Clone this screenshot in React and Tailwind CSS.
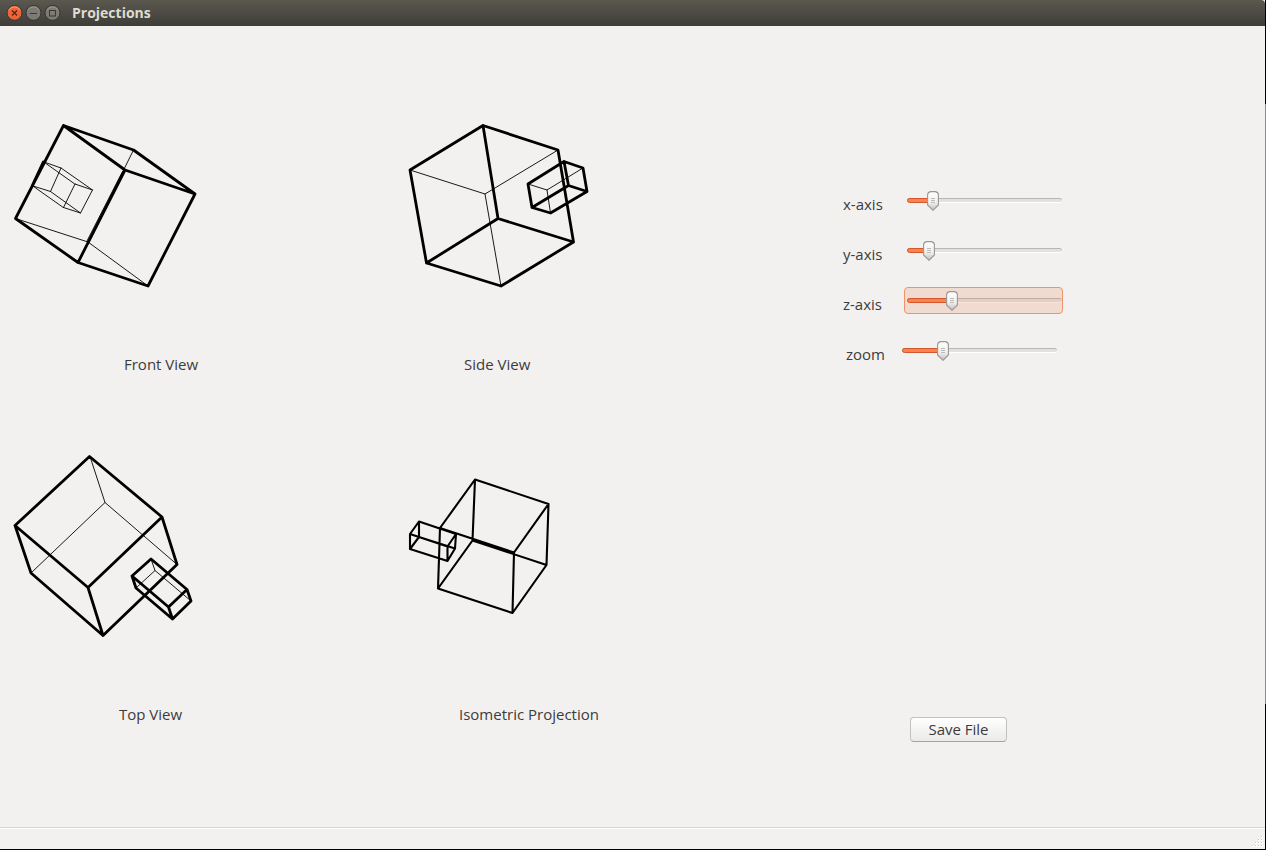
import { useState } from "react";

const views = [
  {
    title: "Front View",
    viewBox: "0 26 220 329",
    labelClass: "pl-[124px]",
    stroke: 2.8,
    thick:
      "M63.5 125.5L133.5 150L195 194L148 286L78 262.5L15.5 218.5ZM63.5 125.5L125 170L195 194M125 170L78 262.5M43.3 162L32.3 185.5",
    thin:
      "M133.5 150L88 242M15.5 218.5L88 242L148 286M44 162L61 168L92.5 190L75 184ZM33 186L50.5 191.5L80.5 213L63.5 207.5ZM61 168L50.5 191.5M92.5 190L80.5 213M75 184L63.5 207.5M122.5 171.5L87 241",
  },
  {
    title: "Side View",
    viewBox: "395 26 220 329",
    labelClass: "pl-[69px]",
    stroke: 2.8,
    thick:
      "M483 125.5L558 150L573.5 242L501 286L426.5 263L410 170ZM483 125.5L498 218.5L426.5 263M498 218.5L573.5 242M564 161.5L583 168L587 191.5L550.5 213L532 207.5L528 184ZM564 161.5L568.5 185.5L532 207.5M568.5 185.5L587 191.5",
    thin:
      "M410 170L485 194L558 150M485 194L501 286M528 184L547 190L583 168M547 190L550.5 213",
  },
  {
    title: "Top View",
    viewBox: "0 376 220 329",
    labelClass: "pl-[119px]",
    stroke: 2.8,
    thick:
      "M89.5 456.5L162 517L177 564.5L103 635.5L31 573L15 525.5ZM15 525.5L88 587.5L162 517M88 587.5L103 635.5M151 559L187 589.5L191 601L172.5 619L136 588L132 576ZM132 576L168.5 607L187 589.5M168.5 607L172.5 619",
    thin:
      "M90 456.5L105 502.5L31 573M105 502.5L177 564.5M151 559L155 570.5L136 588M155 570.5L191 601",
  },
  {
    title: "Isometric Projection",
    viewBox: "395 376 220 329",
    labelClass: "pl-[64px]",
    stroke: 2.1,
    thick:
      "M475 479.5L548.5 504L546.5 565L512.5 613L438 588.5L440 528ZM475 479.5L472.5 540.5L438 588.5M472.5 540.5L546.5 565M440 528L514 552.5L548.5 504M514 552.5L512.5 613M419 521.5L456 534L455 548.5L447.5 561L410 549L410 534ZM419 521.5L419 537L410 549M419 537L455 548.5M410 534L447.5 546.5L456 534M447.5 546.5L447.5 561",
    thin: "",
  },
];

const sliders = [
  { id: "x-axis", max: 360, start: 50 },
  { id: "y-axis", max: 360, start: 40 },
  { id: "z-axis", max: 360, start: 98 },
  { id: "zoom", max: 200, start: 49 },
];

function View({ view }) {
  return (
    <figure>
      <svg
        className="block h-[329px] w-[220px]"
        viewBox={view.viewBox}
        fill="none"
        stroke="#000"
        strokeLinejoin="round"
        strokeLinecap="round"
        aria-hidden="true"
      >
        <path d={view.thin} strokeWidth="0.9" />
        <path d={view.thick} strokeWidth={view.stroke} />
      </svg>
      <figcaption className={"h-5 leading-[18px] whitespace-nowrap " + view.labelClass}>
        {view.title}
      </figcaption>
    </figure>
  );
}

function Thumb() {
  return (
    <svg className="block h-5 w-3" viewBox="0 0 12 20" aria-hidden="true">
      <defs>
        <linearGradient id="thumb" x1="0" y1="0" x2="0" y2="1">
          <stop offset="0" stopColor="#ffffff" />
          <stop offset="0.6" stopColor="#f0efee" />
          <stop offset="1" stopColor="#bdbbb8" />
        </linearGradient>
      </defs>
      <path
        d="M3.5 0.6H8.5Q11.4 1 11.4 4V14L6 19.3L0.6 14V4Q0.6 1 3.5 0.6Z"
        fill="url(#thumb)"
        stroke="#999793"
        strokeWidth="1.1"
      />
      <path d="M4 7.5H8M4 9.5H8M4 11.5H8" stroke="#b5b3b0" strokeWidth="0.9" />
    </svg>
  );
}

function Slider({ slider, active, onActivate }) {
  const [value, setValue] = useState(slider.start);
  const share = value / slider.max;
  const isZoom = slider.id === "zoom";
  return (
    <div className={"flex h-[50px] items-center " + (isZoom ? "pl-[56px]" : "pl-[53px]")}>
      <label
        htmlFor={slider.id}
        className={"shrink-0 pt-2 leading-5 " + (isZoom ? "w-[53px]" : "w-[61px]")}
      >
        {slider.id}
      </label>
      <div
        className={
          "relative flex h-[27px] w-[159px] items-center rounded border pl-[2px] " +
          (active ? "border-[#f19269] bg-[#f1dad0]" : "border-transparent")
        }
      >
        <div
          className={
            "h-[5px] w-[155px] overflow-hidden rounded-full border-t border-b " +
            (active
              ? "border-t-[#c4aca0] border-b-[#f7e6df] bg-[#e5cfc5]"
              : "border-t-[#b8b6b3] border-b-white bg-[#e2e1df]")
          }
        />
        <div
          className="absolute left-[2px] h-[5px] rounded-full border border-[#d0582c] bg-[#f9824f]"
          style={{ width: `${share * 143 + 6}px` }}
        />
        <div className="absolute top-[3px]" style={{ left: `${Math.round(share * 143) + 2}px` }}>
          <Thumb />
        </div>
        <input
          id={slider.id}
          type="range"
          min="0"
          max={slider.max}
          value={value}
          onFocus={onActivate}
          onChange={(e) => setValue(Number(e.target.value))}
          className="absolute inset-0 h-full w-full cursor-pointer opacity-0"
        />
      </div>
    </div>
  );
}

function WindowButton({ label, fill, shine, children }) {
  return (
    <button type="button" aria-label={label} className="block size-[17px]">
      <svg viewBox="0 0 17 17" className="block size-[17px]">
        <circle cx="8.5" cy="7.8" r="7.5" fill={fill} stroke="#353430" />
        <path d="M3 5.3A6.2 6.2 0 0 1 14 5.3" fill="none" stroke={shine} />
        {children}
      </svg>
    </button>
  );
}

function TitleBar() {
  return (
    <header className="flex h-[26px] shrink-0 items-center rounded-tr-sm bg-linear-to-b from-[#5b5850] to-[#3e3d38] pl-1.5 text-[#dfdbd2]">
      <div className="flex gap-[2px]">
        <WindowButton label="Close" fill="#ee6439" shine="#f79a78">
          <path d="M6 5.5L11 10.5M11 5.5L6 10.5" stroke="#5b2512" strokeWidth="1.3" />
        </WindowButton>
        <WindowButton label="Minimize" fill="#7d7b74" shine="#96948c">
          <path d="M5 8.5H12" stroke="#393833" />
        </WindowButton>
        <WindowButton label="Maximize" fill="#7d7b74" shine="#96948c">
          <rect x="5.5" y="5.5" width="6" height="5.5" fill="none" stroke="#393833" />
        </WindowButton>
      </div>
      <h1 className="ml-[11px] text-[14px] leading-5 font-bold">Projections</h1>
    </header>
  );
}

function Grip() {
  const dots = [];
  for (let row = 0; row < 4; row++) {
    for (let col = 3 - row; col < 4; col++) {
      dots.push([col * 3, row * 3]);
    }
  }
  return (
    <svg className="block size-3" viewBox="0 0 12 12" aria-hidden="true">
      {dots.map(([x, y]) => (
        <g key={`${x}-${y}`}>
          <rect x={x} y={y} width="2" height="2" fill="#fff" />
          <rect x={x} y={y} width="1" height="1" fill="#c9c8c5" />
        </g>
      ))}
    </svg>
  );
}

export default function App() {
  const [active, setActive] = useState("z-axis");
  return (
    <div className="flex min-h-screen bg-[#f2f1f0] font-['Open_Sans','Noto_Sans',sans-serif] text-[15px] text-[#3c3c3c]">
      <div className="flex min-w-0 grow flex-col border-b border-black">
        <TitleBar />
        <main className="grid grow grid-cols-[395fr_395fr_475fr] content-start items-start">
          <section className="col-span-2 grid grid-cols-2 gap-y-px">
            {views.map((v) => (
              <View key={v.title} view={v} />
            ))}
          </section>
          <section className="pt-[149px]">
            {sliders.map((s) => (
              <Slider
                key={s.id}
                slider={s}
                active={active === s.id}
                onActivate={() => setActive(s.id)}
              />
            ))}
            <button
              type="button"
              className="mt-[342px] ml-[120px] block h-[25px] w-[97px] rounded border border-[#c3c1be] border-b-[#a5a3a0] bg-linear-to-b from-white to-[#ebeae9] pb-0.5 leading-5"
            >
              Save File
            </button>
          </section>
        </main>
        <footer className="flex h-[22px] shrink-0 items-end justify-end border-t border-[#d8d7d5] pr-px pb-px shadow-[inset_0_1px_0_#ffffff]">
          <Grip />
        </footer>
      </div>
      <div className="flex w-px shrink-0 flex-col bg-black">
        <div className="mt-[104px] h-[600px] bg-[#8c8b88]" />
      </div>
    </div>
  );
}
